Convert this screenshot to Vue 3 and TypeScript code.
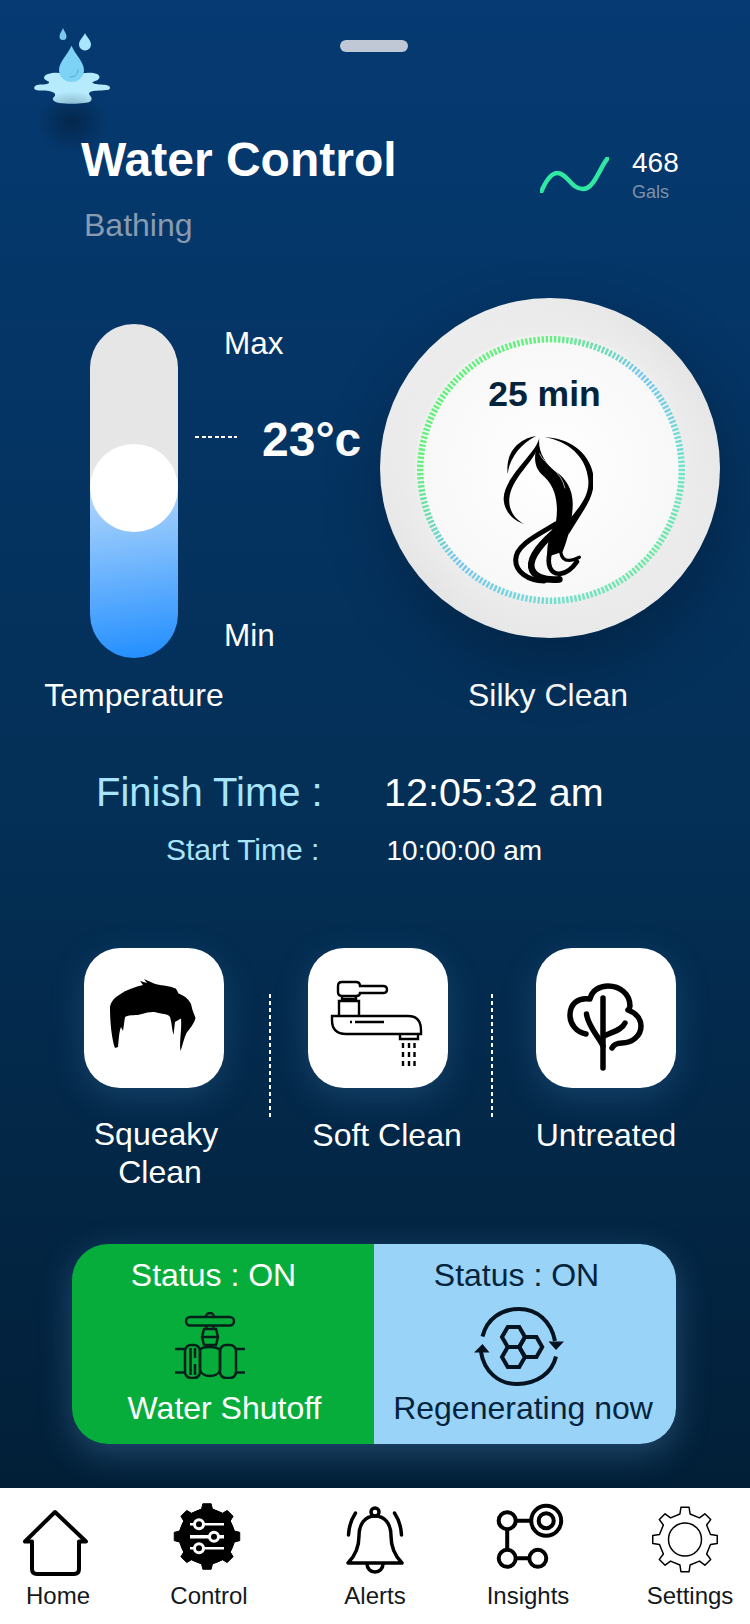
<script setup lang="ts">
// colour stops for the dial ring, by angle clockwise from 12 o'clock
const ringStops: [number, number[]][] = [
  [0, [102, 240, 127]],
  [45, [121, 198, 240]],
  [90, [112, 228, 200]],
  [135, [111, 233, 164]],
  [180, [115, 223, 208]],
  [225, [121, 198, 240]],
  [270, [102, 240, 127]],
  [360, [102, 240, 127]],
]

const ringColor = (deg: number) => {
  for (let i = 0; i < ringStops.length - 1; i++) {
    const [a, ca] = ringStops[i]
    const [b, cb] = ringStops[i + 1]
    if (deg >= a && deg <= b) {
      const t = (deg - a) / (b - a)
      const c = ca.map((v, k) => Math.round(v + (cb[k] - v) * t))
      return `rgb(${c[0]},${c[1]},${c[2]})`
    }
  }
  return 'rgb(102,240,127)'
}

const ticks = Array.from({ length: 200 }, (_, i) => {
  const deg = (i * 360) / 200
  const rad = (deg * Math.PI) / 180
  const s = Math.sin(rad)
  const c = Math.cos(rad)
  return {
    x1: 140 + s * 127.5,
    y1: 140 - c * 127.5,
    x2: 140 + s * 134,
    y2: 140 - c * 134,
    color: ringColor(deg),
  }
})

const gearPath = (cx: number, cy: number, outer: number, inner: number, teeth: number) => {
  const step = (Math.PI * 2) / teeth
  const pts: string[] = []
  for (let i = 0; i < teeth; i++) {
    const a = i * step - Math.PI / 2
    const w = step * 0.2
    const list: [number, number][] = [
      [a - w * 1.25, inner],
      [a - w * 0.8, outer],
      [a + w * 0.8, outer],
      [a + w * 1.25, inner],
    ]
    list.forEach(([ang, r]) => {
      pts.push(`${(cx + Math.cos(ang) * r).toFixed(2)} ${(cy + Math.sin(ang) * r).toFixed(2)}`)
    })
  }
  return 'M' + pts.join(' L') + ' Z'
}

const hexPoints = (cx: number, cy: number, r: number) =>
  Array.from({ length: 6 }, (_, i) => {
    const a = (i * Math.PI) / 3
    return `${(cx + Math.cos(a) * r).toFixed(2)},${(cy + Math.sin(a) * r).toFixed(2)}`
  }).join(' ')

const controlGear = gearPath(36, 34.5, 33, 28, 8)
const settingsGear = gearPath(33, 37.5, 32.5, 26, 8)
const hexes = [hexPoints(39.5, 30, 11.5), hexPoints(39.5, 50, 11.5), hexPoints(56.7, 40, 11.5)]
</script>

<template>
  <div class="screen">
    <div class="main">
      <div class="top-row">
        <div class="logo">
          <svg width="76" height="77" viewBox="0 0 76 77">
            <path d="M14 47 C22 44 30 47 38 47 C46 47 56 44 63 47 C67 49 66 53 61 54 C58 55 57 56 62 57 C66 58 72 57 75 59 C77 61 76 63 72 63 C66 64 60 63 56 65 C54 67 56 68 57 70 C59 73 56 76 50 76 C44 77 32 77 25 76 C20 75 17 72 20 70 C23 67 20 65 15 64 C10 63 5 64 2 63 C-1 62 0 59 3 58 C7 57 13 58 15 56 C16 54 11 54 10 51 C10 49 11 48 14 47 Z" fill="#b6eafd" />
            <path d="M37.5 18.7 C41 27 50 35 50 43 A12.5 12 0 0 1 25 43 C25 35 34 27 37.5 18.7 Z" fill="#7dd3f5" />
            <path d="M44 43 C44 48 40 50 36 50" fill="none" stroke="#5fb8de" stroke-width="1.5" stroke-linecap="round" />
            <path d="M29 1 C30 4 32.5 6.5 32.5 9.5 A3.5 3.5 0 0 1 25.5 9.5 C25.5 6.5 28 4 29 1 Z" fill="#7dc9ef" />
            <path d="M51 6 C52.5 10 57 13 57 17.5 A6 6 0 0 1 45 17.5 C45 13 49.5 10 51 6 Z" fill="#a9e6fc" />
          </svg>
        </div>
        <div class="pill"></div>
      </div>

      <div class="title-row">
        <div class="title-col">
          <h1 class="title">Water Control</h1>
          <div class="subtitle">Bathing</div>
        </div>
        <div class="usage">
          <svg class="spark" width="69" height="36" viewBox="0 0 69 36">
            <path d="M1.5 34 C5 26 10 16 17.5 16 C27 16 31 32 43 32 C54 32 59 12 67.5 1.5" fill="none" stroke="#30e8a3" stroke-width="4.500" stroke-linecap="round" />
          </svg>
          <div class="usage-text">
            <div class="usage-num">468</div>
            <div class="usage-unit">Gals</div>
          </div>
        </div>
      </div>

      <div class="controls">
        <div class="slider">
          <div class="slider-top"></div>
          <div class="slider-fill"></div>
          <div class="knob"></div>
        </div>
        <div class="temp-col">
          <div class="temp-mark temp-max">Max</div>
          <div class="temp-now">
            <span class="dots"></span>
            <span class="temp-value">23°c</span>
          </div>
          <div class="temp-mark temp-min">Min</div>
        </div>
        <div class="dial">
          <svg class="ring" width="280" height="280" viewBox="0 0 280 280">
            <line
              v-for="(t, i) in ticks"
              :key="i"
              :x1="t.x1"
              :y1="t.y1"
              :x2="t.x2"
              :y2="t.y2"
              :stroke="t.color"
              stroke-width="2.400"
            />
          </svg>
          <div class="dial-time">25 min</div>
          <svg class="dial-hair" width="90" height="148" viewBox="66 48 270 444">
            <g fill="#000">
              <path d="M165 48 C120 55 72 90 80 162 C85 115 120 70 165 48 Z" />
              <path d="M190 52 C270 52 342 110 338 190 C336 240 300 280 262 345 L264 300 C300 255 325 225 322 180 C316 110 260 62 190 52 Z" />
              <path d="M175 55 C165 100 70 170 68 235 C68 275 100 305 130 312 C100 298 82 268 85 235 C90 180 150 130 165 95 Z" />
              <path d="M175 55 C170 90 190 130 225 155 C255 175 278 210 275 260 C273 300 265 345 245 395 L200 410 C195 385 205 340 225 305 C232 260 228 205 190 170 C165 150 150 120 175 55 Z" />
            </g>
            <path d="M175 100 C190 135 240 150 252 205" fill="none" stroke="#fafafa" stroke-width="2" />
            <g fill="none" stroke="#000" stroke-linecap="round">
              <path d="M225 312 C170 345 104 375 104 420 C104 455 140 482 190 483" stroke-width="15" />
              <path d="M228 330 C185 365 146 410 151 442 C156 470 190 482 235 478" stroke-width="20" />
              <path d="M232 350 C205 380 198 420 207 443 C218 468 255 472 288 425" stroke-width="14" />
              <path d="M240 370 C234 410 247 436 295 412" stroke-width="10" />
            </g>
          </svg>
        </div>
      </div>

      <div class="control-labels">
        <span class="temp-label">Temperature</span>
        <span class="dial-label">Silky Clean</span>
      </div>

      <div class="time-row finish">
        <span class="time-label">Finish Time :</span>
        <span class="time-value">12:05:32 am</span>
      </div>
      <div class="time-row start">
        <span class="time-label">Start Time :</span>
        <span class="time-value">10:00:00 am</span>
      </div>

      <div class="modes">
        <div class="mode">
          <div class="mode-card">
            <svg width="140" height="140" viewBox="0 0 140 140">
              <path d="M26 60 C26 75 28 92 31 100 L34 99 C35 90 35 84 37 79 L39 83 L41 69 C47 66 52 68 58 66 C64 64 70 63 74 65 C80 66 84 66 86 69 C88 75 88 82 89.5 87 L91 74 L97 70.5 C98 82 95 94 96.5 103 C99 96 100 90 102.5 85 C106 80 110 76 111.5 70 L108.5 62 L107 56 C104 50 99 47 94.5 45.5 C93 42 92 40 90 40 C84 37 76 38 70 35.5 L60 31 L63 35 L56 33 L59 37 C50 39 42 42 35 47 C30 50 26 55 26 60 Z" fill="#000" />
            </svg>
          </div>
          <div class="mode-label squeaky">
            <span>Squeaky</span>
            <span class="second">Clean</span>
          </div>
        </div>
        <div class="sep sep-a"></div>
        <div class="mode">
          <div class="mode-card">
            <svg width="140" height="140" viewBox="0 0 140 140" fill="none" stroke="#000" stroke-width="2.400">
              <path d="M34 34 H48 Q52 34 52 38 H75 Q79 38 79 41.5 Q79 45 75 45 H52 Q52 48 48 48 H34 Q30 48 30 44 V38 Q30 34 34 34 Z" />
              <path d="M34 48 V53 M48 48 V53 M34 51 H48" />
              <path d="M31 68 V53 H51 V68" />
              <path d="M24 68 H100 Q113 68 113 82 V86 H38 Q24 86 24 72 Z" />
              <path d="M42 74 H44 M47 74 H76" />
              <path d="M92 86 V91 H110 V86" />
              <path d="M95 95 V119 M101 95 V119 M106.500 95 V119" stroke-dasharray="5 4" />
            </svg>
          </div>
          <div class="mode-label soft">Soft Clean</div>
        </div>
        <div class="sep sep-b"></div>
        <div class="mode">
          <div class="mode-card">
            <svg width="140" height="140" viewBox="0 0 140 140" fill="none" stroke="#000" stroke-width="5.500" stroke-linecap="round" stroke-linejoin="round">
              <path d="M50 86 C40 84 34 76 34 67 C34 56 42 49 54 51 C56 42 64 38 72 38 C84 38 94 46 94 58 Q94 60 92 62 C100 65 105 71 105 78 C105 88 96 95 86 95 C82 95 78 96 76 100" />
              <path d="M67 50 V120" />
              <path d="M50.500 66 C52 78 62 88 67 98" />
              <path d="M89 75 C86 82 76 84 68 88" />
            </svg>
          </div>
          <div class="mode-label">Untreated</div>
        </div>
      </div>

      <div class="status">
        <div class="status-side shutoff">
          <div class="status-text">Status : ON</div>
          <svg class="status-valve" width="70" height="67" viewBox="0 0 70 67" fill="none" stroke="#04201a" stroke-width="2.500">
            <rect x="11" y="5" width="48" height="8.500" rx="4.250" />
            <path d="M31 5 A4 4 0 0 1 39 5" />
            <path d="M31.500 13.500 V17 M38.500 13.500 V17" />
            <path d="M29 17 H41 L43 25 L41 33 H29 L27 25 Z" />
            <path d="M27.500 25 H42.500" />
            <path d="M25 38 C27 34 42 34 45 38 V58 C43 66 27 66 25 58 Z" />
            <rect x="10" y="33" width="15" height="33" rx="6" />
            <rect x="45" y="33" width="16" height="33" rx="6" />
            <path d="M15.500 36 V63 M20 36 V46 M20 52 V63" />
            <path d="M0 37 H10 M0 60.500 H10 M61 37 H70 M61 60.500 H70" />
          </svg>
          <div class="status-name">Water Shutoff</div>
        </div>
        <div class="status-side regen">
          <div class="status-text">Status : ON</div>
          <svg class="status-regen" width="90" height="79" viewBox="0 0 90 79">
            <g fill="none" stroke="#04131f" stroke-width="4">
              <path d="M8.500 29.500 C13 11 28 2 45 2 C63 2 77 14 81 34" />
              <path d="M82 49.500 C78 66 63 77 43 77 C24 77 10 64 7 45" />
              <polygon v-for="(h, i) in hexes" :key="i" :points="h" />
            </g>
            <path d="M74.500 34.500 H90 L82 43 Z M0 45.500 H15.500 L8.500 37 Z" fill="#04131f" />
          </svg>
          <div class="status-name">Regenerating now</div>
        </div>
      </div>
    </div>

    <nav class="nav">
      <div class="nav-item">
        <svg width="76" height="76" viewBox="0 0 76 76" fill="none" stroke="#000" stroke-width="4" stroke-linejoin="round">
          <path d="M35 10 L5 39.500 H12 V67 Q12 72 17 72 H54 Q59 72 59 67 V39.500 H66 Z" />
        </svg>
        <span>Home</span>
      </div>
      <div class="nav-item">
        <svg width="76" height="76" viewBox="0 0 76 76">
          <path :d="controlGear" fill="#000" stroke="#000" stroke-linejoin="round" />
          <circle cx="36" cy="34.500" r="28" fill="#000" />
          <g stroke="#fff" fill="none">
            <path d="M19 22.300 H53" stroke-width="2.500" />
            <path d="M19 34.700 H53" stroke-width="3.500" />
            <path d="M19 46.300 H53" stroke-width="2.500" />
          </g>
          <g fill="#000" stroke="#fff" stroke-width="3">
            <circle cx="28" cy="22.300" r="4.500" />
            <circle cx="43" cy="34.700" r="4.500" />
            <circle cx="28" cy="46.300" r="4.500" />
          </g>
        </svg>
        <span>Control</span>
      </div>
      <div class="nav-item">
        <svg width="76" height="76" viewBox="0 0 76 76" fill="none" stroke="#000" stroke-width="3.500" stroke-linecap="round" stroke-linejoin="round">
          <path d="M11 61 Q22 50 22 34 C22 22 28 14 38 14 C48 14 54 22 54 34 Q54 50 65 61 Z" />
          <circle cx="38" cy="10" r="4" />
          <path d="M30 62 A8 8 0 0 0 46 62" />
          <path d="M18.500 11 Q12 21 11.500 33 M57.500 11 Q64 21 64.500 33" />
        </svg>
        <span>Alerts</span>
      </div>
      <div class="nav-item">
        <svg width="76" height="76" viewBox="0 0 76 76" fill="none" stroke="#000" stroke-width="4">
          <circle cx="17.200" cy="18.700" r="8.500" />
          <circle cx="56.200" cy="18.700" r="15" />
          <circle cx="56.200" cy="18.700" r="7.500" />
          <circle cx="17.200" cy="56.300" r="8.500" />
          <circle cx="47.800" cy="56.300" r="8.500" />
          <path d="M25.700 18.700 H41 M17.200 27.200 V47.800 M25.700 56.300 H39.300" />
        </svg>
        <span>Insights</span>
      </div>
      <div class="nav-item nav-settings">
        <svg width="76" height="76" viewBox="0 0 76 76" fill="none" stroke="#000" stroke-width="1.500" stroke-linejoin="round">
          <path :d="settingsGear" />
          <circle cx="33" cy="37.500" r="16.500" />
        </svg>
        <span>Settings</span>
      </div>
    </nav>
  </div>
</template>

<style scoped>
.screen {
  width: 750px;
  height: 1624px;
  display: flex;
  flex-direction: column;
  overflow: hidden;
  background: linear-gradient(180deg, #053a72 0%, #042f56 50%, #021f37 92%);
  font-family: "Liberation Sans", Arial, sans-serif;
  color: #fff;
}

.main {
  flex: 1;
}

.top-row {
  display: flex;
  align-items: flex-start;
  padding: 27px 0 0 34px;
}

.logo {
  position: relative;
  width: 76px;
  height: 77px;
}

.logo svg {
  display: block;
  overflow: visible;
}

.logo::after {
  content: '';
  position: absolute;
  left: 2px;
  top: 64px;
  width: 72px;
  height: 62px;
  background: radial-gradient(closest-side, rgba(2, 25, 50, 0.55), rgba(2, 25, 50, 0));
}

.pill {
  width: 68px;
  height: 12px;
  margin: 13px 0 0 230px;
  border-radius: 6px;
  background: #bfc8d4;
}

.title-row {
  display: flex;
  margin-top: 28px;
  padding: 0 68px 0 81px;
}

.title-col {
  flex: 1;
  position: relative;
}

.title {
  margin: 0;
  font-size: 48px;
  line-height: 56px;
  font-weight: 700;
}

.subtitle {
  margin: 18px 0 0 3px;
  font-size: 32px;
  line-height: 38px;
  color: #8a9bb0;
}

.usage {
  display: flex;
  gap: 23px;
  margin-top: 15px;
}

.spark {
  display: block;
  margin-top: 10px;
}

.usage-text {
  width: 50px;
}

.usage-num {
  font-size: 28px;
  line-height: 32px;
}

.usage-unit {
  margin-top: 2px;
  font-size: 18px;
  line-height: 22px;
  color: #7f92a9;
}

.controls {
  display: flex;
  align-items: flex-start;
  height: 360px;
  margin-top: 54px;
  padding-left: 90px;
}

.slider {
  position: relative;
  display: flex;
  flex-direction: column;
  width: 88px;
  height: 334px;
  margin-top: 26px;
  border-radius: 44px;
  overflow: hidden;
}

.slider-top {
  height: 164px;
  background: #e6e6e6;
}

.slider-fill {
  flex: 1;
  background: linear-gradient(172deg, #a8d2fc 8%, #1f8dff 100%);
}

.knob {
  position: absolute;
  left: 0;
  top: 120px;
  width: 88px;
  height: 88px;
  border-radius: 50%;
  background: #fff;
}

.temp-col {
  width: 185px;
  margin: 27px 0 0 17px;
}

.temp-mark {
  font-size: 31.500px;
  line-height: 36px;
  padding-left: 29px;
}

.temp-now {
  display: flex;
  align-items: center;
  margin-top: 49px;
}

.dots {
  width: 42px;
  height: 2px;
  margin: 0 25px 3px 0;
  background: repeating-linear-gradient(90deg, #fff 0 4px, transparent 4px 6.500px);
}

.temp-value {
  margin-top: 3px;
  font-size: 48px;
  line-height: 54px;
  font-weight: 700;
}

.temp-min {
  margin-top: 150px;
}

.dial {
  position: relative;
  display: flex;
  flex-direction: column;
  align-items: center;
  width: 340px;
  height: 340px;
  padding-top: 75px;
  box-sizing: border-box;
  border-radius: 50%;
  background:
    radial-gradient(circle at 50% 50%, #ffffff 0, #f8f8f8 128px, #ececec 136px, rgba(236, 236, 236, 0) 170px),
    linear-gradient(135deg, #f0f0f0 0%, #e4e4e4 50%, #ededed 100%);
  box-shadow: 6px 24px 60px rgba(0, 20, 40, 0.4);
}

.ring {
  position: absolute;
  left: 31px;
  top: 31.500px;
}

.dial-time {
  position: relative;
  margin-right: 11px;
  font-size: 35.500px;
  line-height: 42px;
  font-weight: 700;
  color: #04233c;
}

.dial-hair {
  position: relative;
  margin: 21px 5px 0 0;
}

.control-labels {
  display: flex;
  margin-top: 19px;
  padding-left: 44px;
  font-size: 32px;
  line-height: 36px;
  white-space: nowrap;
}

.temp-label {
  width: 180px;
  text-align: center;
}

.dial-label {
  width: 340px;
  margin-left: 154px;
  text-align: center;
}

.time-row {
  display: flex;
  align-items: baseline;
}

.time-label {
  color: #a8e4fb;
}

.finish {
  margin-top: 56px;
  padding-left: 96px;
  font-size: 40px;
  line-height: 46px;
}

.finish .time-label {
  width: 288px;
}

.finish .time-value {
  font-size: 39.500px;
}

.start {
  margin-top: 18px;
  padding-left: 166px;
  font-size: 30px;
  line-height: 34px;
}

.start .time-label {
  width: 220.500px;
}

.start .time-value {
  font-size: 28px;
}

.modes {
  display: flex;
  align-items: flex-start;
  margin-top: 80px;
  padding-left: 84px;
  height: 241px;
}

.mode {
  display: flex;
  flex-direction: column;
  align-items: center;
  width: 140px;
}

.mode-card {
  width: 140px;
  height: 140px;
  border-radius: 36px;
  background: #fff;
  box-shadow: 0 10px 34px rgba(70, 130, 185, 0.28);
}

.mode-card svg {
  display: block;
}

.mode-label {
  margin-top: 29px;
  font-size: 32px;
  line-height: 37px;
  white-space: nowrap;
  text-align: center;
}

.squeaky {
  display: flex;
  flex-direction: column;
  margin-top: 27px;
  padding-left: 4px;
  line-height: 38px;
}

.squeaky .second {
  padding-left: 8px;
}

.soft {
  padding-left: 18px;
}

.sep {
  width: 2px;
  height: 124px;
  margin-top: 46px;
  background: repeating-linear-gradient(180deg, #fff 0 4px, transparent 4px 7px);
}

.sep-a {
  margin-left: 45px;
  margin-right: 37px;
}

.sep-b {
  margin-left: 43px;
  margin-right: 43px;
}

.status {
  display: flex;
  width: 604px;
  height: 200px;
  margin: 55px 0 0 71.500px;
  border-radius: 36px;
  overflow: hidden;
  box-shadow: 0 10px 34px rgba(100, 160, 215, 0.32);
}

.status-side {
  display: flex;
  flex-direction: column;
  align-items: center;
  width: 302px;
  padding-top: 13px;
}

.shutoff {
  background: #07ad3a;
  color: #fff;
}

.regen {
  background: #99d3f7;
  color: #04233c;
}

.status-text {
  margin-right: 16px;
  font-size: 32px;
  line-height: 36px;
}

.shutoff .status-text {
  margin-right: 18px;
}

.status-valve {
  margin: 19px 26px 0 0;
}

.status-regen {
  margin: 14px 11px 0 0;
}

.status-name {
  font-size: 32px;
  line-height: 37px;
  white-space: nowrap;
}

.shutoff .status-name {
  margin: 11px 0 0 4px;
}

.regen .status-name {
  margin: 4px 3px 0 0;
}

.nav {
  display: grid;
  grid-template-columns: 116px 186px 146px 160px 142px;
  height: 136px;
  box-sizing: border-box;
  padding-top: 14px;
  background: #fff;
  color: #14171c;
}

.nav-item {
  display: flex;
  flex-direction: column;
  align-items: center;
  font-size: 24px;
  line-height: 28px;
}

.nav-item svg {
  display: block;
  margin-bottom: 4px;
  overflow: visible;
}

.nav-settings {
  padding-left: 22px;
}
</style>

<style>
html,
body {
  margin: 0;
  background: #021f37;
}
</style>
